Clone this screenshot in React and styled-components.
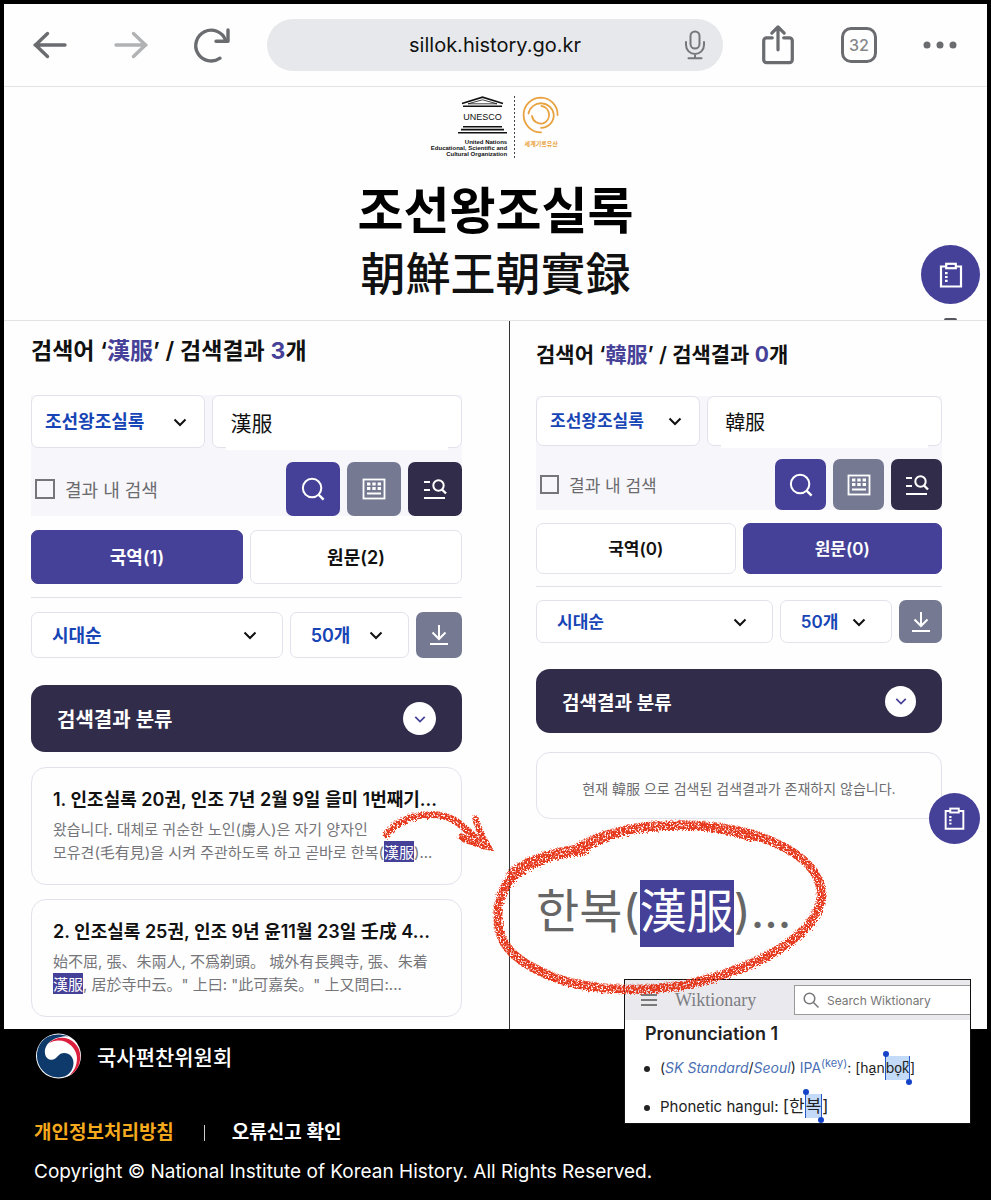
import React, { useState } from "react";
import styled, { createGlobalStyle, css, ThemeProvider } from "styled-components";

const large = {
  heading: 23,
  headingTop: 14,
  headingGap: 28,
  field: 53,
  tool: 54,
  rowGap: 14,
  gap: 7,
  ruleTop: 13,
  ruleBottom: 14,
  filter: 46,
  bannerTop: 27,
  banner: 67,
  bannerText: 20,
  circle: 33,
  listTop: 15,
  text: 18,
  query: 21,
  check: 20,
  right: 47,
};

const small = {
  heading: 21,
  headingTop: 18,
  headingGap: 25,
  field: 50,
  tool: 51,
  rowGap: 13,
  gap: 7,
  ruleTop: 12,
  ruleBottom: 13,
  filter: 43,
  bannerTop: 26,
  banner: 64,
  bannerText: 19,
  circle: 31,
  listTop: 19,
  text: 17,
  query: 20,
  check: 19,
  right: 45,
};

const ChevronIcon = ({ size = 14 }) => (
  <svg width={size} height={size} viewBox="0 0 14 14" fill="none" stroke="currentColor" strokeWidth="2">
    <path d="M1.5 4.5 7 10l5.5-5.5" />
  </svg>
);

const SearchIcon = () => (
  <svg width="24" height="24" viewBox="0 0 26 26" fill="none" stroke="currentColor" strokeWidth="2.2">
    <circle cx="12" cy="12" r="10" />
    <path d="m19 19 5.5 5.5" strokeWidth="2.6" />
  </svg>
);

const KeyboardIcon = () => (
  <svg width="24" height="22" viewBox="0 0 24 22" fill="none" stroke="currentColor">
    <rect x="1.5" y="1.5" width="21" height="19" strokeWidth="1.8" />
    <path d="M5 6h3.4M10.3 6h3.4M15.6 6H19M5 10.5h3.4M10.3 10.5h3.4M15.6 10.5H19" strokeWidth="3" />
    <path d="M5 15.5h14" strokeWidth="2" />
  </svg>
);

const DetailSearchIcon = () => (
  <svg width="24" height="22" viewBox="0 0 24 22" fill="none" stroke="currentColor" strokeWidth="2">
    <path d="M1 4h6M1 12h6M1 20h21" />
    <circle cx="15.5" cy="7.5" r="5.2" />
    <path d="m19 11.5 4 4" strokeWidth="2.4" />
  </svg>
);

const DownloadIcon = () => (
  <svg width="20" height="22" viewBox="0 0 20 22" fill="none" stroke="currentColor" strokeWidth="2">
    <path d="M10 1v14M3.5 8.5 10 15l6.5-6.5M1 20h18" />
  </svg>
);

const ClipboardIcon = ({ size = 26 }) => (
  <svg width={size} height={size} viewBox="0 0 26 26" fill="none" stroke="currentColor" strokeWidth="2.2">
    <path d="M8 4.5H3v20h20v-20h-5" />
    <rect x="8.2" y="1.8" width="9.6" height="4.4" />
    <path d="M7 11.2h2.6M7 15h2.6M7 18.8h2.6" />
  </svg>
);

const MenuLines = () => (
  <svg width="16" height="14" viewBox="0 0 16 14" stroke="#555" strokeWidth="1.6">
    <path d="M0 2h16M0 7h16M0 12h16" />
  </svg>
);

const Temple = () => (
  <svg width="49" height="38" viewBox="0 0 49 38" fill="none" stroke="#111">
    <path d="M4 7.5 24.5 1.2 45 7.5" strokeWidth="1.6" />
    <path d="M10 7.8 24.5 3.8 39 7.8Z" strokeWidth="0.8" />
    <path d="M5 10.3h39M5 30.8h39M3 33.6h43M0 36.8h49" strokeWidth="1.6" />
    <text x="24.5" y="24" textAnchor="middle" fontFamily="Liberation Sans, sans-serif" fontSize="9" fill="#111" stroke="none">
      UNESCO
    </text>
  </svg>
);

const MemoryEmblem = () => (
  <svg width="38" height="38" viewBox="0 0 38 38" fill="none" stroke="#e9a240" strokeLinecap="round" strokeWidth="1.8">
    <path d="M35.6 19A17 17 0 0 0 19 1.6 17.3 17.3 0 1 0 19 36.4" />
    <path d="M6.5 17.5A12.8 12.8 0 0 1 31.8 19 12.8 12.8 0 0 1 19 31.8" />
    <path d="M19.5 10A9 9 0 0 1 21 27.4 9 9 0 0 1 10 20" />
  </svg>
);

const Taegeuk = () => (
  <svg width="45" height="46" viewBox="0 0 132 134">
    <circle cx="66" cy="67" r="66" fill="#fff" />
    <path
      d="M96 9C30-10 3 32 3 67c0 34 28 63 63 63 30 0 44-22 44-43 0-17-12-29-27-29-20 0-21 20-37 20-12 0-20-10-20-23C26 28 56 8 96 9Z"
      fill="#0d3a6b"
    />
    <path d="M36 30C72-6 130 20 130 68c0 28-13 47-32 56 17-16 23-34 22-54C117 35 76 6 36 30Z" fill="#dd1f3e" />
  </svg>
);

// rough edges and grain for the red pencil marks
const CrayonFilter = ({ id }) => (
  <filter id={id} x="-10%" y="-10%" width="120%" height="120%">
    <feTurbulence type="fractalNoise" baseFrequency="0.6" numOctaves="3" seed="4" result="noise" />
    <feDisplacementMap in="SourceGraphic" in2="noise" scale="7" result="rough" />
    <feColorMatrix in="noise" type="matrix" values="0 0 0 0 0  0 0 0 0 0  0 0 0 0 0  0 0 0 -5 3.5" result="grain" />
    <feComposite in="rough" in2="grain" operator="in" />
  </filter>
);

const App = () => (
  <>
    <GlobalStyle />
    <Page>
      <BrowserBar />
      <Masthead>
        <Emblems>
          <Unesco>
            <Temple />
            <span>
              United Nations
              <br />
              Educational, Scientific and
              <br />
              Cultural Organization
            </span>
          </Unesco>
          <Dots />
          <Memory>
            <MemoryEmblem />
            <span>세계기록유산</span>
          </Memory>
        </Emblems>
        <SiteTitle>조선왕조실록</SiteTitle>
        <SiteHanja>朝鮮王朝實録</SiteHanja>
        <HeadFloat aria-label="목록">
          <ClipboardIcon />
        </HeadFloat>
        <Sliver />
      </Masthead>
      <Columns>
        <ThemeProvider theme={large}>
          <Panel>
            <SearchPanel id="left" word="漢服" total={3} tabs={["국역(1)", "원문(2)"]} start={0} />
            <List>
              <Card>
                <CardTitle href="#r1">1. 인조실록 20권, 인조 7년 2월 9일 을미 1번째기...</CardTitle>
                <CardText>
                  왔습니다. 대체로 귀순한 노인(虜人)은 자기 양자인
                  <br />
                  모유견(毛有見)을 시켜 주관하도록 하고 곧바로 한복(<Mark>漢服</Mark>)...
                </CardText>
                <Arrow viewBox="0 0 120 60">
                  <CrayonFilter id="crayon-arrow" />
                  <g filter="url(#crayon-arrow)" fill="none" stroke="#e5391b" strokeLinecap="round">
                    <path d="M9 34C28 12 66 8 84 25c10 8 16 14 22 21" strokeWidth="7" />
                    <path d="M98 18c3 10 8 20 13 29-9-2-20-5-29-11l25 6-8-20" strokeWidth="6" />
                  </g>
                </Arrow>
              </Card>
              <Card>
                <CardTitle href="#r2">2. 인조실록 25권, 인조 9년 윤11월 23일 壬戌 4...</CardTitle>
                <CardText>
                  始不屈, 張、朱兩人, 不爲剃頭。 城外有長興寺, 張、朱着
                  <br />
                  <Mark>漢服</Mark>, 居於寺中云。" 上曰: "此可嘉矣。" 上又問曰:...
                </CardText>
              </Card>
            </List>
          </Panel>
        </ThemeProvider>
        <ThemeProvider theme={small}>
          <Panel $divided>
            <SearchPanel id="right" word="韓服" total={0} tabs={["국역(0)", "원문(0)"]} start={1} />
            <List>
              <Empty>
                현재 韓服 으로 검색된 검색결과가 존재하지 않습니다.
                <CardFloat aria-label="목록">
                  <ClipboardIcon size={23} />
                </CardFloat>
              </Empty>
            </List>
            <Magnified>
              한복(<Mark>漢服</Mark>)...
              <Ring viewBox="0 0 350 200">
                <CrayonFilter id="crayon-ring" />
                <g filter="url(#crayon-ring)" fill="none" stroke="#e5391b" strokeLinecap="round">
                  <path
                    d="M92 37C50 42 14 58 9 90c-6 38 11 54 43 69 42 21 120 24 182 2 56-19 99-49 97-82C328 40 266 13 196 12 155 11 115 17 84 37"
                    strokeWidth="9"
                  />
                  <path d="M22 62C38 46 66 40 94 36" strokeWidth="11" />
                  <path d="M98 32C140 8 210 6 262 24" strokeWidth="9" />
                </g>
              </Ring>
            </Magnified>
          </Panel>
        </ThemeProvider>
      </Columns>
      <Footer>
        <Institute>
          <Taegeuk />
          국사편찬위원회
        </Institute>
        <FooterLinks>
          <FooterLink href="#privacy" $accent>
            개인정보처리방침
          </FooterLink>
          <Separator />
          <FooterLink href="#report">오류신고 확인</FooterLink>
        </FooterLinks>
        <Copyright>Copyright © National Institute of Korean History. All Rights Reserved.</Copyright>
        <WiktionaryCard />
      </Footer>
    </Page>
  </>
);

export default App;

const BrowserBar = () => (
  <Bar>
    <BarGroup>
      <BarButton aria-label="Back">
        <svg width="36" height="30" viewBox="0 0 36 30">
          <path d="M33 15H3M15.5 3.5 3.5 15l12 11.5" />
        </svg>
      </BarButton>
      <BarButton aria-label="Forward" $muted>
        <svg width="36" height="30" viewBox="0 0 36 30">
          <path d="M3 15h30M20.5 3.5l12 11.5-12 11.5" />
        </svg>
      </BarButton>
      <BarButton aria-label="Reload">
        <svg width="36" height="36" viewBox="0 0 36 36">
          <path d="M26 31.2A15.4 15.4 0 1 1 31.5 13" />
          <path d="M34 3v11.2H22" />
        </svg>
      </BarButton>
    </BarGroup>
    <Address>
      <AddressInput aria-label="Address" defaultValue="sillok.history.go.kr" />
      <MicButton aria-label="Voice search">
        <svg width="22" height="30" viewBox="0 0 22 30">
          <rect x="6.5" y="1.5" width="9" height="17" rx="4.5" />
          <path d="M2 12v3a9 9 0 0 0 18 0v-3M11 24v4M4.5 28.2h13" />
        </svg>
      </MicButton>
    </Address>
    <BarGroup>
      <BarButton aria-label="Share">
        <svg width="34" height="40" viewBox="0 0 34 42">
          <path d="M11 13.5H5a3 3 0 0 0-3 3v20a3 3 0 0 0 3 3h24a3 3 0 0 0 3-3v-20a3 3 0 0 0-3-3h-6M17 26V3M10.5 8.5 17 2l6.5 6.5" />
        </svg>
      </BarButton>
      <BarButton aria-label="Tabs">
        <TabCount>32</TabCount>
      </BarButton>
      <BarButton aria-label="More">
        <svg width="36" height="10" viewBox="0 0 36 10">
          <path d="M5 5h.01M18 5h.01M31 5h.01" />
        </svg>
      </BarButton>
    </BarGroup>
  </Bar>
);

const SearchPanel = ({ id, word, total, tabs, start }) => {
  const [active, setActive] = useState(start);

  return (
    <>
      <Heading>
        검색어 ‘<em>{word}</em>’ / 검색결과 <em>{total}</em>개
      </Heading>
      <SearchForm onSubmit={(e) => e.preventDefault()}>
        <FieldRow>
          <SelectBox label="자료" options={["조선왕조실록"]} pad={13} />
          <QueryBox>
            <QueryInput aria-label="검색어" defaultValue={word} />
          </QueryBox>
        </FieldRow>
        <ToolRow>
          <CheckLabel htmlFor={`${id}-within`}>
            <Check id={`${id}-within`} type="checkbox" />
            결과 내 검색
          </CheckLabel>
          <ToolButton $color="#464198" aria-label="검색">
            <SearchIcon />
          </ToolButton>
          <ToolButton type="button" $color="#757a92" aria-label="자판">
            <KeyboardIcon />
          </ToolButton>
          <ToolButton type="button" $color="#302c4a" aria-label="상세검색">
            <DetailSearchIcon />
          </ToolButton>
        </ToolRow>
      </SearchForm>
      <Tabs>
        {tabs.map((tab, i) => (
          <Tab key={tab} type="button" $active={i === active} onClick={() => setActive(i)}>
            {tab}
          </Tab>
        ))}
      </Tabs>
      <Rule />
      <FilterRow>
        <SelectBox label="정렬" options={["시대순"]} pad={20} end={26} />
        <SelectBox label="개수" options={["50개"]} pad={20} end={26} />
        <DownloadButton type="button" aria-label="내려받기">
          <DownloadIcon />
        </DownloadButton>
      </FilterRow>
      <Banner type="button">
        검색결과 분류
        <Circle>
          <ChevronIcon size={12} />
        </Circle>
      </Banner>
    </>
  );
};

const SelectBox = ({ label, options, pad, end = 18 }) => (
  <SelectWrap $end={end}>
    <Select aria-label={label} $pad={pad}>
      {options.map((option) => (
        <option key={option}>{option}</option>
      ))}
    </Select>
    <ChevronIcon />
  </SelectWrap>
);

const WiktionaryCard = () => (
  <Wiki>
    <WikiHead>
      <MenuLines />
      <WikiName>Wiktionary</WikiName>
      <WikiSearch>
        <svg width="16" height="16" viewBox="0 0 16 16" fill="none" stroke="#777" strokeWidth="1.5">
          <circle cx="6.5" cy="6.5" r="5.3" />
          <path d="m10.5 10.5 5 5" />
        </svg>
        <input aria-label="Search Wiktionary" placeholder="Search Wiktionary" />
      </WikiSearch>
    </WikiHead>
    <WikiTitle>Pronunciation 1</WikiTitle>
    <WikiList>
      <WikiItem $size={14}>
        (
        <a href="#sk">
          <i>SK Standard</i>
        </a>
        /
        <a href="#seoul">
          <i>Seoul</i>
        </a>
        ) <a href="#ipa">IPA</a>
        <sup>
          (<a href="#key">key</a>)
        </sup>
        : [ha̠n<Selection>bo̞k̚</Selection>]
      </WikiItem>
      <WikiItem $size={15}>
        Phonetic hangul:{" "}
        <Hangul>
          [한<Selection>복</Selection>]
        </Hangul>
      </WikiItem>
    </WikiList>
  </Wiki>
);

const GlobalStyle = createGlobalStyle`
  * {
    box-sizing: border-box;
  }
  body {
    margin: 0;
    background-color: #000;
    color: #111;
    font-family: Inter, "Noto Sans CJK KR", sans-serif;
  }
  button, input, select {
    font: inherit;
    color: inherit;
    border: 0;
    padding: 0;
    margin: 0;
    outline: 0;
    background: transparent;
  }
  button {
    cursor: pointer;
  }
  a {
    color: inherit;
    text-decoration: none;
  }
  svg {
    display: block;
    flex-shrink: 0;
  }
`;

const center = css`
  display: flex;
  align-items: center;
  justify-content: center;
`;

const Page = styled.div`
  border: 4px solid #000;
  background-color: #fefefe;
  overflow: hidden;
`;

const Bar = styled.header`
  display: flex;
  align-items: center;
  gap: 33px;
  padding: 15px 25px 15px 24px;
  border-bottom: 1px solid #e3e4e6;
`;
const BarGroup = styled.div`
  display: flex;
  align-items: center;
  gap: 37px;
`;
const BarButton = styled.button`
  ${center}
  width: 44px;
  height: 44px;
  color: ${(p) => (p.$muted ? "#b1b2b4" : "#6a6c70")};

  svg {
    overflow: visible;
    fill: none;
    stroke: currentColor;
    stroke-width: 3.4px;
    stroke-linecap: round;
    stroke-linejoin: round;
  }
  svg[height="10"] {
    stroke-width: 7px;
  }
`;
const Address = styled.div`
  flex: 1;
  min-width: 0;
  height: 52px;
  display: grid;
  align-items: center;
  border-radius: 26px;
  background-color: #e6e8eb;

  > * {
    grid-area: 1 / 1;
  }
`;
const AddressInput = styled.input`
  width: 100%;
  text-align: center;
  font-size: 20px;
`;
const MicButton = styled.button`
  justify-self: end;
  margin-right: 17px;

  svg {
    fill: none;
    stroke: #75777b;
    stroke-width: 2px;
    stroke-linecap: round;
  }
`;
const TabCount = styled.span`
  ${center}
  width: 36px;
  height: 36px;
  border: 3px solid #6a6c70;
  border-radius: 10px;
  font-size: 16px;
  font-weight: 500;
  color: #85878b;
`;

const Masthead = styled.section`
  position: relative;
  display: flex;
  flex-direction: column;
  align-items: center;
  padding: 9px 0 18px;
  border-bottom: 1px solid #e3e4e6;
`;
const Emblems = styled.div`
  display: flex;
  gap: 7px;
  height: 63px;
`;
const Unesco = styled.div`
  display: flex;
  flex-direction: column;
  align-items: flex-end;
  gap: 5px;

  span {
    font: 700 6px/6px "Liberation Sans", sans-serif;
    text-align: right;
  }
`;
const Dots = styled.div`
  width: 1px;
  background: repeating-linear-gradient(#444 0 2px, transparent 2px 4px);
`;
const Memory = styled.div`
  display: flex;
  flex-direction: column;
  align-items: center;
  gap: 6px;

  span {
    font-size: 6px;
    line-height: 8px;
    font-weight: 700;
    color: #e9a240;
  }
`;
const SiteTitle = styled.h1`
  margin: 24px 0 0;
  font-size: 50px;
  line-height: 56px;
  font-weight: 700;
  color: #000;
`;
const SiteHanja = styled.p`
  margin: 9px 0 0;
  font-size: 45px;
  line-height: 54px;
  font-weight: 500;
`;
const floating = css`
  ${center}
  position: absolute;
  border-radius: 50%;
  color: #fff;
  background-color: #464198;
`;
const HeadFloat = styled.button`
  ${floating}
  right: 7px;
  bottom: 16px;
  width: 59px;
  height: 59px;
`;
const Sliver = styled.span`
  position: absolute;
  right: 30px;
  bottom: 0;
  width: 13px;
  height: 2px;
  border-radius: 6px 6px 0 0;
  background-color: #55565e;
`;

const Columns = styled.main`
  display: grid;
  grid-template-columns: 505fr 478fr;
`;
const Panel = styled.section`
  min-width: 0;
  padding: ${(p) => p.theme.headingTop}px ${(p) => p.theme.right}px 12px ${(p) => (p.$divided ? 26 : 27)}px;
  border-left: ${(p) => (p.$divided ? "1px solid #333" : 0)};
  font-size: ${(p) => p.theme.text}px;
`;
const Heading = styled.h2`
  margin: 0 0 ${(p) => p.theme.headingGap}px;
  font-size: ${(p) => p.theme.heading}px;
  line-height: 32px;
  font-weight: 600;

  em {
    font-style: normal;
    font-weight: 700;
    color: #464198;
  }
`;
const SearchForm = styled.form`
  background-color: #f7f6fa;
`;
const FieldRow = styled.div`
  display: grid;
  grid-template-columns: 174fr 249fr;
  gap: ${(p) => p.theme.gap}px;
`;
const SelectWrap = styled.div`
  display: grid;
  align-items: center;
  min-width: 0;

  > * {
    grid-area: 1 / 1;
  }
  svg {
    justify-self: end;
    margin-right: ${(p) => p.$end}px;
    pointer-events: none;
  }
`;
const field = css`
  width: 100%;
  border: 1px solid #e2e2ec;
  border-radius: 7px;
  background-color: #fff;
`;
const Select = styled.select`
  ${field}
  height: 100%;
  appearance: none;
  padding-left: ${(p) => p.$pad}px;
  font-weight: 600;
  color: #1745b5;
`;
const QueryBox = styled.div`
  position: relative;

  &::after {
    content: "";
    position: absolute;
    left: 14px;
    right: 14px;
    bottom: -2px;
    height: 4px;
    background-color: #fff;
  }
`;
const QueryInput = styled.input`
  ${field}
  height: ${(p) => p.theme.field}px;
  padding-left: 17px;
  font-size: ${(p) => p.theme.query}px;
`;
const ToolRow = styled.div`
  display: flex;
  align-items: center;
  gap: ${(p) => p.theme.gap}px;
  padding-top: ${(p) => p.theme.rowGap}px;
`;
const CheckLabel = styled.label`
  flex: 1;
  display: flex;
  align-items: center;
  gap: 10px;
  padding-left: 4px;
  color: #6b6b6e;
`;
const Check = styled.input`
  appearance: none;
  width: ${(p) => p.theme.check}px;
  height: ${(p) => p.theme.check}px;
  border: 2px solid #76767a;

  &:checked {
    background-color: #464198;
  }
`;
const ToolButton = styled.button`
  ${center}
  width: ${(p) => p.theme.tool}px;
  height: ${(p) => p.theme.tool}px;
  border-radius: 7px;
  color: #fff;
  background-color: ${(p) => p.$color};
`;
const Tabs = styled.div`
  display: grid;
  grid-template-columns: 1fr 1fr;
  gap: ${(p) => p.theme.gap}px;
  margin-top: ${(p) => p.theme.rowGap}px;
`;
const Tab = styled.button`
  height: ${(p) => p.theme.tool}px;
  border: 1px solid ${(p) => (p.$active ? "#464198" : "#e2e2ec")};
  border-radius: 7px;
  padding-bottom: 2px;
  font-weight: 600;
  color: ${(p) => (p.$active ? "#fff" : "#111")};
  background-color: ${(p) => (p.$active ? "#464198" : "#fff")};
`;
const Rule = styled.hr`
  margin: ${(p) => p.theme.ruleTop}px 0 ${(p) => p.theme.ruleBottom}px;
  border: 0;
  border-top: 1px solid #e1e1ea;
`;
const FilterRow = styled.div`
  display: grid;
  grid-template-columns: 251fr 119fr ${(p) => p.theme.filter}px;
  grid-auto-rows: ${(p) => p.theme.filter}px;
  gap: ${(p) => p.theme.gap}px;
`;
const DownloadButton = styled.button`
  ${center}
  border-radius: 7px;
  color: #fff;
  background-color: #757a92;
`;
const Banner = styled.button`
  display: flex;
  align-items: center;
  justify-content: space-between;
  width: 100%;
  height: ${(p) => p.theme.banner}px;
  margin-top: ${(p) => p.theme.bannerTop}px;
  padding: 0 26px;
  border-radius: 14px;
  font-size: ${(p) => p.theme.bannerText}px;
  font-weight: 600;
  color: #fff;
  background-color: #302c4a;
`;
const Circle = styled.span`
  ${center}
  width: ${(p) => p.theme.circle}px;
  height: ${(p) => p.theme.circle}px;
  border-radius: 50%;
  color: #464198;
  background-color: #fff;
`;
const List = styled.div`
  display: flex;
  flex-direction: column;
  gap: 14px;
  margin-top: ${(p) => p.theme.listTop}px;
`;
const Card = styled.article`
  position: relative;
  padding: 19px 10px 20px 21px;
  border: 1px solid #e2e2ec;
  border-radius: 15px;
  white-space: nowrap;
`;
const CardTitle = styled.a`
  display: block;
  font-size: 18px;
  line-height: 26px;
  font-weight: 600;
`;
const CardText = styled.p`
  margin: 6px 0 0;
  font-size: 15px;
  line-height: 22px;
  color: #75757a;
`;
const Mark = styled.mark`
  font-family: "Noto Sans CJK KR", sans-serif;
  color: #fff;
  background-color: #464198;
`;
const Empty = styled.div`
  ${center}
  position: relative;
  height: 67px;
  padding-top: 4px;
  border: 1px solid #e2e2ec;
  border-radius: 14px;
  font-size: 14px;
  color: #6c6c70;
  white-space: nowrap;
`;
const CardFloat = styled.button`
  ${floating}
  right: -39px;
  bottom: -26px;
  width: 51px;
  height: 51px;
`;
const Magnified = styled.p`
  position: relative;
  margin: 58px 0 0;
  font-size: 47px;
  line-height: 68px;
  color: #666;
  white-space: nowrap;

  ${Mark} {
    padding: 2px 0 8px;
    font-family: inherit;
  }
`;
const Arrow = styled.svg`
  position: absolute;
  z-index: 2;
  right: -36px;
  top: 32px;
  width: 120px;
  height: 60px;
  pointer-events: none;
`;
const Ring = styled.svg`
  position: absolute;
  z-index: 3;
  left: -46px;
  top: -64px;
  width: 350px;
  height: 200px;
  pointer-events: none;
`;

const Footer = styled.footer`
  position: relative;
  padding: 4px 30px 11px;
  color: #fff;
  background-color: #000;
`;
const Institute = styled.div`
  display: flex;
  align-items: center;
  gap: 16px;
  padding-left: 2px;
  font-size: 21px;
  font-weight: 500;
`;
const FooterLinks = styled.nav`
  display: flex;
  align-items: center;
  margin-top: 40px;
  font-size: 19px;
  line-height: 28px;
`;
const FooterLink = styled.a`
  font-weight: 600;
  color: ${(p) => (p.$accent ? "#f5a91d" : "#fff")};
`;
const Separator = styled.span`
  width: 1px;
  height: 16px;
  margin: 0 27px 0 30px;
  background-color: #ccc;
`;
const Copyright = styled.p`
  margin: 11px 0 0;
  font-size: 19px;
  line-height: 28px;
`;

const Wiki = styled.aside`
  position: absolute;
  z-index: 2;
  right: 16px;
  top: -50px;
  width: 347px;
  height: 145px;
  border: 1px solid #111;
  color: #222;
  background-color: #fff;
`;
const WikiHead = styled.div`
  display: flex;
  align-items: center;
  height: 40px;
  padding-left: 16px;
  background-color: #e9e9ee;
`;
const WikiName = styled.span`
  flex: 1;
  padding-left: 18px;
  font-family: "Liberation Serif", serif;
  font-size: 18px;
  color: #7d7d82;
`;
const WikiSearch = styled.label`
  display: flex;
  align-items: center;
  gap: 8px;
  width: 176px;
  height: 30px;
  padding-left: 8px;
  border: 1px solid #999;
  border-right: 0;
  background-color: #fff;

  input {
    flex: 1;
    min-width: 0;
    font-size: 12px;
  }
  input::placeholder {
    color: #777;
  }
`;
const WikiTitle = styled.h3`
  margin: 1px 0 7px;
  padding-left: 20px;
  font-size: 18px;
  line-height: 26px;
  font-weight: 600;
`;
const WikiList = styled.ul`
  display: flex;
  flex-direction: column;
  gap: 10px;
  margin: 0;
  padding: 0 0 0 19px;
  list-style: none;
`;
const WikiItem = styled.li`
  height: 28px;
  font-size: ${(p) => p.$size}px;
  line-height: 28px;
  white-space: nowrap;

  &::before {
    content: "";
    display: inline-block;
    width: 6px;
    height: 6px;
    margin-right: 10px;
    border-radius: 50%;
    vertical-align: middle;
    background-color: #222;
  }
  a,
  sup {
    color: #4a6fb5;
  }
  sup {
    font-size: 11px;
    line-height: 0;
  }
`;
const Hangul = styled.span`
  font-size: 17px;
`;
const Selection = styled.span`
  position: relative;
  display: inline-block;
  line-height: 24px;
  border: solid #2356c9;
  border-width: 0 1px;
  background-color: #c3dbf8;

  &::before,
  &::after {
    content: "";
    position: absolute;
    width: 6px;
    height: 6px;
    border-radius: 50%;
    background-color: #1443c8;
  }
  &::before {
    left: -3px;
    top: -5px;
  }
  &::after {
    right: -3px;
    bottom: -5px;
  }
`;
